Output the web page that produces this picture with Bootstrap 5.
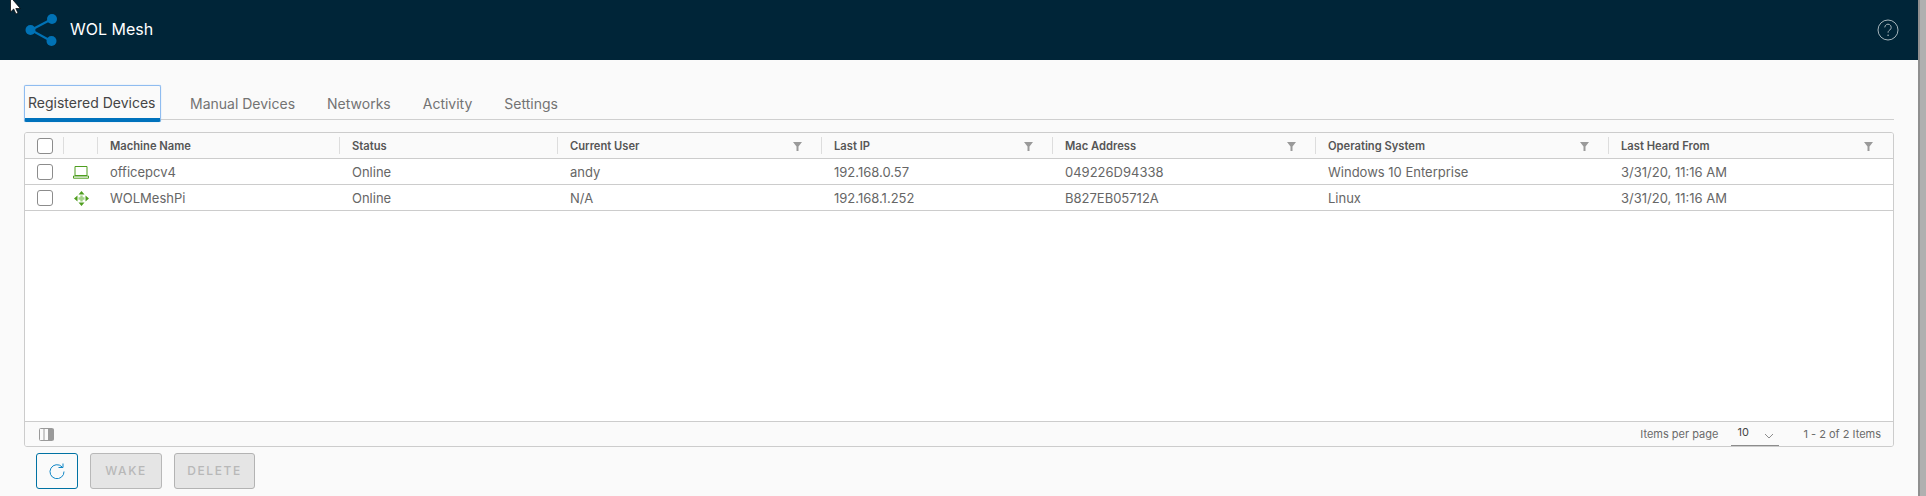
<!DOCTYPE html><html lang="en">
<head>
  <meta charset="UTF-8">
  <meta name="viewport" content="width=device-width, initial-scale=1.0">
  <title>WOL Mesh</title>
  <link href="https://cdn.jsdelivr.net/npm/bootstrap@5.3.0/dist/css/bootstrap.min.css" rel="stylesheet">
  <style>
    html, body { height: 496px; overflow: hidden; }
    body { background-color: #fafafa; font-family: Inter, "Noto Sans", sans-serif; color: #565656; position: relative; }
    .page-main { width: 1918px; height: 496px; }
    .scroll-strip { width: 8px; height: 496px; background-color: #b0b0b0; border-left: 2px solid #8f8f8f; }
    .mouse-cursor { position: absolute; left: 10px; top: 0; }

    .app-header { height: 60px; background-color: #002538; padding: 0 19px 0 24px; }
    .app-title { color: #fff; font-size: 16px; margin-left: 10px; margin-top: -2px; }

    .app-content { padding: 25px 24px 0 24px; }
    .tab-bar { height: 35px; border-bottom: 1px solid #cfcfcf; gap: 32px; flex-wrap: nowrap; }
    .tab-bar .nav-link { color: #737373; font-size: 14px; padding: 0; height: 34px; line-height: 37px; }
    .tab-bar .nav-link.active { color: #454545; padding: 0 3px; width: 137px; margin-right: -3px; border: 1px solid #8fbcf0; border-bottom: 4px solid #0072bc; border-radius: 2px; height: 37px; box-shadow: 0 0 1px #8fbcf0; line-height: 34px; }

    .grid-box { margin-top: 12px; height: 315px; background-color: #fff; border: 1px solid #ccc; border-radius: 3px; overflow: hidden; }
    .grid-body { flex: 1 1 auto; }
    .device-table { table-layout: fixed; width: 100%; margin: 0; font-size: 13px; --bs-table-bg: transparent; --bs-table-color: #666; }
    .device-table th, .device-table td { padding: 0 12px; vertical-align: middle; border-bottom: 1px solid #ccc; }
    .device-table td { height: 26px; padding-top: 3px; }
    .device-table th { height: 25px; padding-top: 2px; background-color: #fafafa; font-size: 11.2px; font-weight: 600; color: #565656; position: relative; }
    .device-table th + th::before { content: ""; position: absolute; left: -1px; top: 4px; bottom: 4px; width: 1px; background-color: #ddd; }
    .device-table .cell-tight { padding: 2px 0 0; text-align: center; }
    .cw-check { width: 39px; } .cw-icon { width: 34px; } .cw-name { width: 242px; } .cw-status { width: 218px; }
    .cw-user { width: 264px; } .cw-ip { width: 231px; } .cw-mac { width: 263px; } .cw-os { width: 293px; }
    .filter-mark { float: right; margin-right: 8px; margin-top: 4px; }

    .row-check.form-check-input { width: 16px; height: 16px; border: 1px solid #8c8c8c; border-radius: 3px; background-color: #fff; display: block; margin: 0 auto 0 12px; }

    .grid-foot { height: 25px; flex: 0 0 25px; background-color: #fafafa; border-top: 1px solid #ccc; font-size: 11px; color: #6a6a6a; padding: 1px 12px 0 14px; }
    .page-size { width: 48px; height: 24px; margin: 0 24px 0 13px; border-bottom: 1px solid #8c8c8c; color: #454545; padding-left: 6px; align-self: flex-end; line-height: 21px; }
    .size-chevron { margin-top: 11px; margin-right: 5px; }

    .action-row { margin-top: 6px; padding-left: 12px; gap: 12px; }
    .action-row .btn { height: 36px; border-radius: 3px; font-size: 12px; font-weight: 500; letter-spacing: 1.6px; padding: 0; }
    .refresh-btn { width: 42px; border: 1px solid #0072a3; background-color: transparent; }
    .action-row .btn:disabled { background-color: #e5e5e5; color: #b8b8b8; opacity: 1; }
    .wake-btn { width: 72px; border: 1px solid #e5e5e5; }
    .delete-btn { width: 81px; border: 1px solid #b3b3b3; }
    .action-row .delete-btn:disabled { border-color: #b3b3b3; }
  </style>
</head>
<body>
  <div class="d-flex">
    <div class="page-main">
      <header class="app-header d-flex align-items-center justify-content-between">
        <div class="d-flex align-items-center">
          <svg width="36" height="40" viewBox="0 0 36 40">
            <line x1="7" y1="20" x2="28" y2="9" stroke="#0072b5" stroke-width="2"/>
            <line x1="7" y1="20" x2="27" y2="31" stroke="#0072b5" stroke-width="2"/>
            <circle cx="6.5" cy="20" r="5" fill="#0072b5"/>
            <circle cx="28" cy="9" r="5" fill="#0072b5"/>
            <circle cx="27.500" cy="31" r="5" fill="#0072b5"/>
          </svg>
          <span class="app-title">WOL Mesh</span>
        </div>
        <svg width="22" height="22" viewBox="0 0 22 22">
          <circle cx="11" cy="11" r="10" fill="none" stroke="#a7b5bb" stroke-width="1"/>
          <path d="M7.800 8.400a3.200 3.200 0 1 1 4.900 2.700c-1.100.7-1.600 1.300-1.600 2.600" fill="none" stroke="#a7b5bb" stroke-width="1"/>
          <circle cx="11.100" cy="16.200" r=".8" fill="#a7b5bb"/>
        </svg>
      </header>

      <div class="app-content">
        <ul class="nav tab-bar">
          <li class="nav-item"><a class="nav-link active" href="#">Registered Devices</a></li>
          <li class="nav-item"><a class="nav-link" href="#">Manual Devices</a></li>
          <li class="nav-item"><a class="nav-link" href="#">Networks</a></li>
          <li class="nav-item"><a class="nav-link" href="#">Activity</a></li>
          <li class="nav-item"><a class="nav-link" href="#">Settings</a></li>
        </ul>

        <div class="grid-box d-flex flex-column">
          <div class="grid-body">
            <table class="table device-table">
              <thead>
                <tr>
                  <th class="cw-check cell-tight"><input class="form-check-input row-check" type="checkbox"></th>
                  <th class="cw-icon"></th>
                  <th class="cw-name">Machine Name</th>
                  <th class="cw-status">Status</th>
                  <th class="cw-user">Current User<svg class="filter-mark" width="9" height="9" viewBox="0 0 9 9"><path d="M0 0h9L5.500 4.500V9h-2V4.500z" fill="#9a9a9a"/></svg></th>
                  <th class="cw-ip">Last IP<svg class="filter-mark" width="9" height="9" viewBox="0 0 9 9"><path d="M0 0h9L5.500 4.500V9h-2V4.500z" fill="#9a9a9a"/></svg></th>
                  <th class="cw-mac">Mac Address<svg class="filter-mark" width="9" height="9" viewBox="0 0 9 9"><path d="M0 0h9L5.500 4.500V9h-2V4.500z" fill="#9a9a9a"/></svg></th>
                  <th class="cw-os">Operating System<svg class="filter-mark" width="9" height="9" viewBox="0 0 9 9"><path d="M0 0h9L5.500 4.500V9h-2V4.500z" fill="#9a9a9a"/></svg></th>
                  <th>Last Heard From<svg class="filter-mark" width="9" height="9" viewBox="0 0 9 9"><path d="M0 0h9L5.500 4.500V9h-2V4.500z" fill="#9a9a9a"/></svg></th>
                </tr>
              </thead>
              <tbody>
                <tr>
                  <td class="cell-tight"><input class="form-check-input row-check" type="checkbox"></td>
                  <td class="cell-tight">
                    <svg width="16" height="13" viewBox="0 0 16 13" class="d-block mx-auto">
                      <path d="M2 .5h12v9H2z" fill="none" stroke="#4f9e1f" stroke-width="1"/>
                      <path d="M.5 10h15v2.200H.5z" fill="none" stroke="#4f9e1f" stroke-width="1"/>
                    </svg>
                  </td>
                  <td>officepcv4</td>
                  <td>Online</td>
                  <td>andy</td>
                  <td>192.168.0.57</td>
                  <td>049226D94338</td>
                  <td>Windows 10 Enterprise</td>
                  <td>3/31/20, 11:16 AM</td>
                </tr>
                <tr>
                  <td class="cell-tight"><input class="form-check-input row-check" type="checkbox"></td>
                  <td class="cell-tight">
                    <svg width="15" height="15" viewBox="0 0 15 15" class="d-block mx-auto">
                      <path d="M7.500 4.500v6M4.500 7.500h6" stroke="#a5d38a" stroke-width="2.400"/>
                      <path d="M7.500 0l3 3.500h-6zM7.500 15l-3-3.500h6zM0 7.500l3.500-3v6zM15 7.500l-3.500 3v-6z" fill="#4f9e1f"/>
                    </svg>
                  </td>
                  <td>WOLMeshPi</td>
                  <td>Online</td>
                  <td>N/A</td>
                  <td>192.168.1.252</td>
                  <td>B827EB05712A</td>
                  <td>Linux</td>
                  <td>3/31/20, 11:16 AM</td>
                </tr>
              </tbody>
            </table>
          </div>
          <div class="grid-foot d-flex align-items-center justify-content-between">
            <svg width="15" height="13" viewBox="0 0 15 13">
              <rect x=".5" y=".5" width="14" height="12" rx="1" fill="none" stroke="#9a9a9a"/>
              <path d="M5 .5v12M9.500 .5v12" stroke="#9a9a9a"/>
              <rect x="10" y="1" width="4.500" height="11" fill="#9a9a9a"/>
            </svg>
            <div class="d-flex align-items-center h-100">
              <span>Items per page</span>
              <span class="page-size d-flex justify-content-between">10
                <svg class="size-chevron" width="10" height="7" viewBox="0 0 10 7"><path d="M1 1l4 4 4-4" fill="none" stroke="#8c8c8c"/></svg>
              </span>
              <span>1 - 2 of 2 Items</span>
            </div>
          </div>
        </div>

        <div class="action-row d-flex">
          <button class="btn refresh-btn d-flex align-items-center justify-content-center" type="button" aria-label="Refresh">
            <svg width="16" height="16" viewBox="0 0 16 16">
              <path d="M13 3.800A7 7 0 1 0 15 8.500" fill="none" stroke="#0f86c6" stroke-width="1"/>
              <path d="M9.500 4.500h4.500V.5" fill="none" stroke="#0f86c6" stroke-width="1"/>
            </svg>
          </button>
          <button class="btn wake-btn" type="button" disabled>WAKE</button>
          <button class="btn delete-btn" type="button" disabled>DELETE</button>
        </div>
      </div>
    </div>
    <div class="scroll-strip"></div>
  </div>

  <svg class="mouse-cursor" width="12" height="16" viewBox="0 0 12 16">
    <path d="M.5 -3v15l3.200-3 2.300 5 2-1-2.200-4.500h4.500z" fill="#fff" stroke="#000" stroke-width=".7"/>
  </svg>

  <script src="https://cdn.jsdelivr.net/npm/bootstrap@5.3.0/dist/js/bootstrap.bundle.min.js"></script>
</body>
</html>
